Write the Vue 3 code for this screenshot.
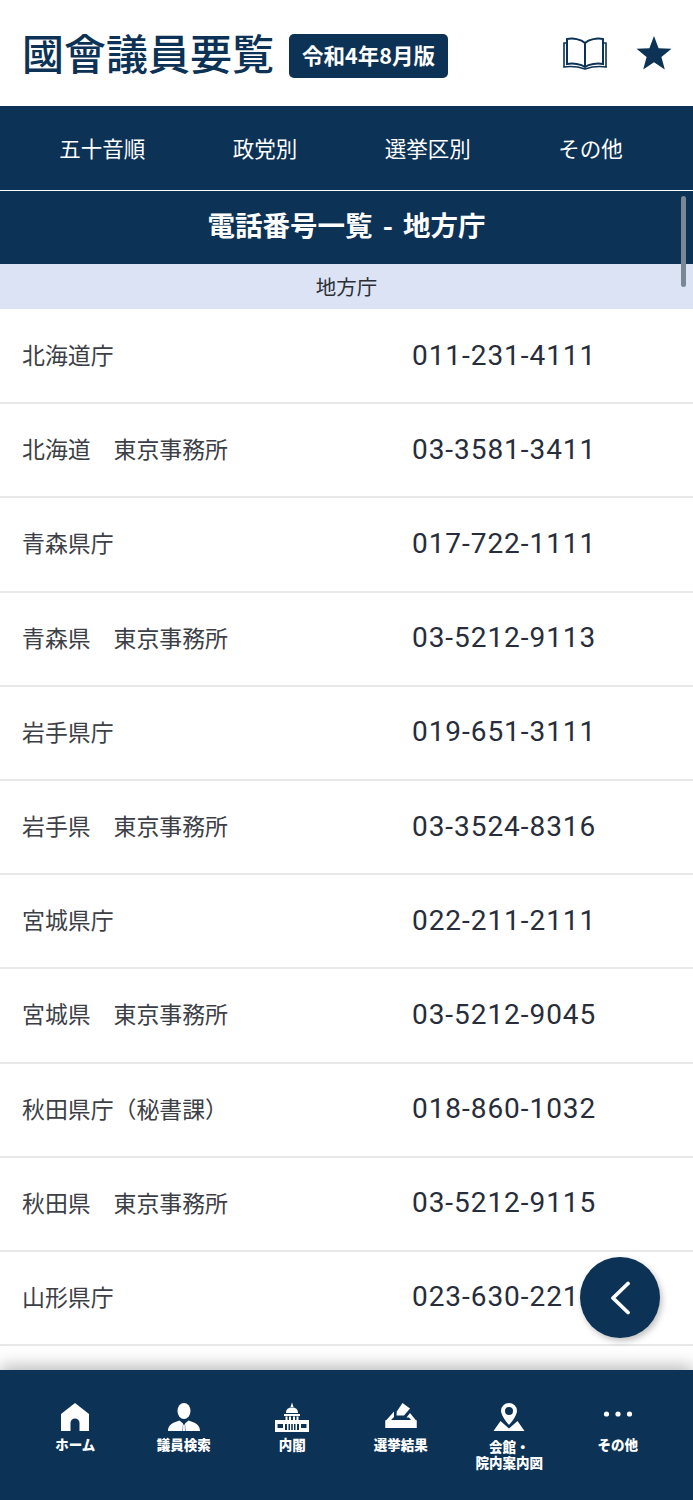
<script setup>
const tabs = ['五十音順', '政党別', '選挙区別', 'その他']
const rows = [
  ['北海道庁', '011-231-4111'],
  ['北海道　東京事務所', '03-3581-3411'],
  ['青森県庁', '017-722-1111'],
  ['青森県　東京事務所', '03-5212-9113'],
  ['岩手県庁', '019-651-3111'],
  ['岩手県　東京事務所', '03-3524-8316'],
  ['宮城県庁', '022-211-2111'],
  ['宮城県　東京事務所', '03-5212-9045'],
  ['秋田県庁（秘書課）', '018-860-1032'],
  ['秋田県　東京事務所', '03-5212-9115'],
  ['山形県庁', '023-630-2211'],
  ['', ''],
]
</script>

<template>
  <div class="page">
    <header class="top">
      <h1 class="brand">國會議員要覧</h1>
      <span class="edition">令和4年8月版</span>
      <div class="top-icons">
        <svg class="book" viewBox="0 0 46 34" fill="none" stroke="#0c3256" stroke-width="2">
          <path d="M23 7C19 3 11 2 5 3V28C11 27 19 28 23 31C27 28 35 27 41 28V3C35 2 27 3 23 7Z" />
          <path d="M23 7V31" />
          <path d="M5 7H2V31C9 30 17 31 23 33C29 31 37 30 44 31V7H41" stroke-width="1.6" />
        </svg>
        <svg class="star" viewBox="0 0 36 36" fill="#0c3256">
          <path d="M18 1L22.6 13.2L35.5 13.8L25.4 21.9L28.8 34.5L18 27.3L7.2 34.5L10.6 21.9L.5 13.8L13.4 13.2Z" />
        </svg>
      </div>
    </header>

    <nav class="tabs">
      <a v-for="t in tabs" :key="t" class="tab">{{ t }}</a>
    </nav>
    <div class="title">電話番号一覧 - 地方庁</div>
    <div class="section">地方庁</div>

    <main class="list">
      <div v-for="(r, i) in rows" :key="i" class="row">
        <span class="name">{{ r[0] }}</span>
        <span class="phone">{{ r[1] }}</span>
      </div>
    </main>

    <footer class="bottom">
      <a class="item">
        <svg class="ico" viewBox="0 0 32 32" fill="#fff"><path d="M16 2L30 13V30H20.500V22A4.500 4.500 0 0 0 11.500 22V30H2V13Z" /></svg>
        <span>ホーム</span>
      </a>
      <a class="item">
        <svg class="ico" viewBox="0 0 32 32" fill="#fff">
          <ellipse cx="16" cy="10" rx="6.500" ry="8" />
          <path d="M0 30C0 24 4 22 11.500 19.500L15 22.500L14.500 30ZM32 30C32 24 28 22 20.500 19.500L17 22.500L17.500 30Z" />
          <path d="M15.200 23.500H16.800L17 30H15Z" />
        </svg>
        <span>議員検索</span>
      </a>
      <a class="item">
        <svg class="ico" viewBox="0 0 34 32" fill="#fff">
          <path d="M17 1.500L18.500 6H15.500ZM11 12C11 8 13.500 6.500 17 6.500S23 8 23 12ZM9 13H25V15H9ZM10.500 15.500H12.500V19H10.500ZM14 15.500H16V19H14ZM18 15.500H20V19H18ZM21.500 15.500H23.500V19H21.500Z" />
          <path d="M0 19H34V31H0ZM10 23V29H24V23ZM2.500 23V27H8V23ZM26 23V27H31.500V23Z" fill-rule="evenodd" />
          <path d="M12 23H13.500V29H12ZM15 23H16.200V29H15ZM17.800 23H19V29H17.800ZM20.500 23H22V29H20.500Z" />
        </svg>
        <span>内閣</span>
      </a>
      <a class="item">
        <svg class="ico" viewBox="0 0 32 32" fill="#fff">
          <path d="M17.500 2L25 7.500L19 14.500H11.500L11.800 10.500Z" />
          <path d="M9 10.500L.500 20V27H31.500V20L25 12L21.500 16.500H24L26.500 19.500H5.500L9 16Z" />
          <path d="M.500 19H31.500V27H.500Z" />
        </svg>
        <span>選挙結果</span>
      </a>
      <a class="item">
        <svg class="ico" viewBox="0 0 32 32" fill="#fff">
          <path fill-rule="evenodd" d="M16 2A8 8 0 0 0 8 10C8 15 16 24 16 24S24 15 24 10A8 8 0 0 0 16 2ZM16 6A4 4 0 1 1 16 14A4 4 0 0 1 16 6Z" />
          <path d="M7.500 20L16 27.500L24.500 20L31.500 30H.500Z" />
        </svg>
        <span class="two-line">会館・<br />院内案内図</span>
      </a>
      <a class="item">
        <svg class="ico" viewBox="0 0 32 32" fill="#fff">
          <circle cx="4.500" cy="13" r="2.600" /><circle cx="16" cy="13" r="2.600" /><circle cx="27.500" cy="13" r="2.600" />
        </svg>
        <span>その他</span>
      </a>
    </footer>

    <div class="scrollbar"></div>
    <button class="fab" aria-label="戻る">
      <svg viewBox="0 0 20 34" fill="none" stroke="#fff" stroke-width="3.800" stroke-linecap="round" stroke-linejoin="round">
        <path d="M17.500 2.500L2.500 17L17.500 31.500" />
      </svg>
    </button>
  </div>
</template>

<style scoped>
.page {
  position: relative;
  width: 693px;
  height: 1500px;
  overflow: hidden;
  display: flex;
  flex-direction: column;
  background: #fff;
  font-family: "Noto Sans CJK JP", "Noto Sans", sans-serif;
  color: #2b3037;
}
.top {
  height: 105px;
  flex: none;
  display: flex;
  align-items: center;
  padding: 6px 21px 0 22px;
  box-sizing: border-box;
}
.brand {
  margin: 0 0 7px;
  font-size: 42px;
  line-height: 1;
  font-weight: 500;
  color: #0c3256;
}
.edition {
  margin-left: 15px;
  width: 159px;
  height: 44px;
  padding-bottom: 3px;
  box-sizing: border-box;
  display: flex;
  align-items: center;
  justify-content: center;
  border-radius: 5px;
  background: #0c3256;
  color: #fff;
  font-size: 21.500px;
  font-weight: 700;
}
.top-icons {
  margin-left: auto;
  margin-bottom: 5px;
  display: flex;
  align-items: center;
  gap: 28px;
}
.book { width: 46px; height: 34px; display: block; }
.star { width: 36px; height: 36px; display: block; }
.tabs {
  height: 84px;
  flex: none;
  box-sizing: border-box;
  margin-top: 1px;
  display: grid;
  grid-template-columns: repeat(4, 1fr);
  align-items: center;
  justify-items: center;
  padding: 0 21px 2px;
  background: #0c3256;
  color: #fff;
  font-size: 21.500px;
}
.title {
  height: 73px;
  flex: none;
  margin-top: 1px;
  padding-bottom: 8px;
  word-spacing: 4px;
  display: flex;
  align-items: center;
  justify-content: center;
  background: #0c3256;
  color: #fff;
  font-size: 27.500px;
  font-weight: 700;
  box-sizing: border-box;
}
.section {
  height: 45px;
  flex: none;
  padding-bottom: 2px;
  box-sizing: border-box;
  display: flex;
  align-items: center;
  justify-content: center;
  background: #dce3f4;
  font-size: 20.500px;
  color: #2b3037;
}
.list { flex: 1; min-height: 0; overflow: hidden; padding-top: 1px; }
.row {
  height: 94.200px;
  box-sizing: border-box;
  display: flex;
  align-items: center;
  padding-left: 22px;
  padding-bottom: 2px;
  border-bottom: 2px solid #e8e8e8;
}
.row:last-child { border-bottom: 0; }
.name { width: 390px; flex: none; font-size: 22.900px; color: #3c4046; padding-bottom: 2px; }
.phone {
  font-family: "Roboto", "Noto Sans", sans-serif;
  font-size: 28px;
  letter-spacing: 0.950px;
  color: #272d3a;
}
.bottom {
  position: relative;
  height: 130px;
  flex: none;
  box-sizing: border-box;
  padding: 31px 21px 0;
  display: grid;
  grid-template-columns: repeat(6, 1fr);
  background: #0c3256;
  color: #fff;
  box-shadow: 0 -4px 16px rgba(0, 0, 0, 0.28);
}
.item {
  display: flex;
  flex-direction: column;
  align-items: center;
  font-size: 13.500px;
  line-height: 16px;
  font-weight: 900;
  text-align: center;
}
.ico { width: 32px; height: 32px; display: block; margin-bottom: 3px; }
.item:nth-child(3) .ico { width: 34px; }
.two-line { margin-top: 2px; }
.scrollbar {
  position: absolute;
  left: 681px;
  top: 196px;
  width: 5px;
  height: 91px;
  border-radius: 3px;
  background: #7b8794;
}
.fab {
  position: absolute;
  left: 580px;
  top: 1257px;
  width: 80px;
  height: 81px;
  padding: 0;
  border: 0;
  border-radius: 50%;
  background: #0c3256;
  display: flex;
  align-items: center;
  justify-content: center;
  box-shadow: 2px 3px 6px rgba(0, 0, 0, 0.25);
}
.fab svg { width: 21px; height: 34px; display: block; }
</style>
